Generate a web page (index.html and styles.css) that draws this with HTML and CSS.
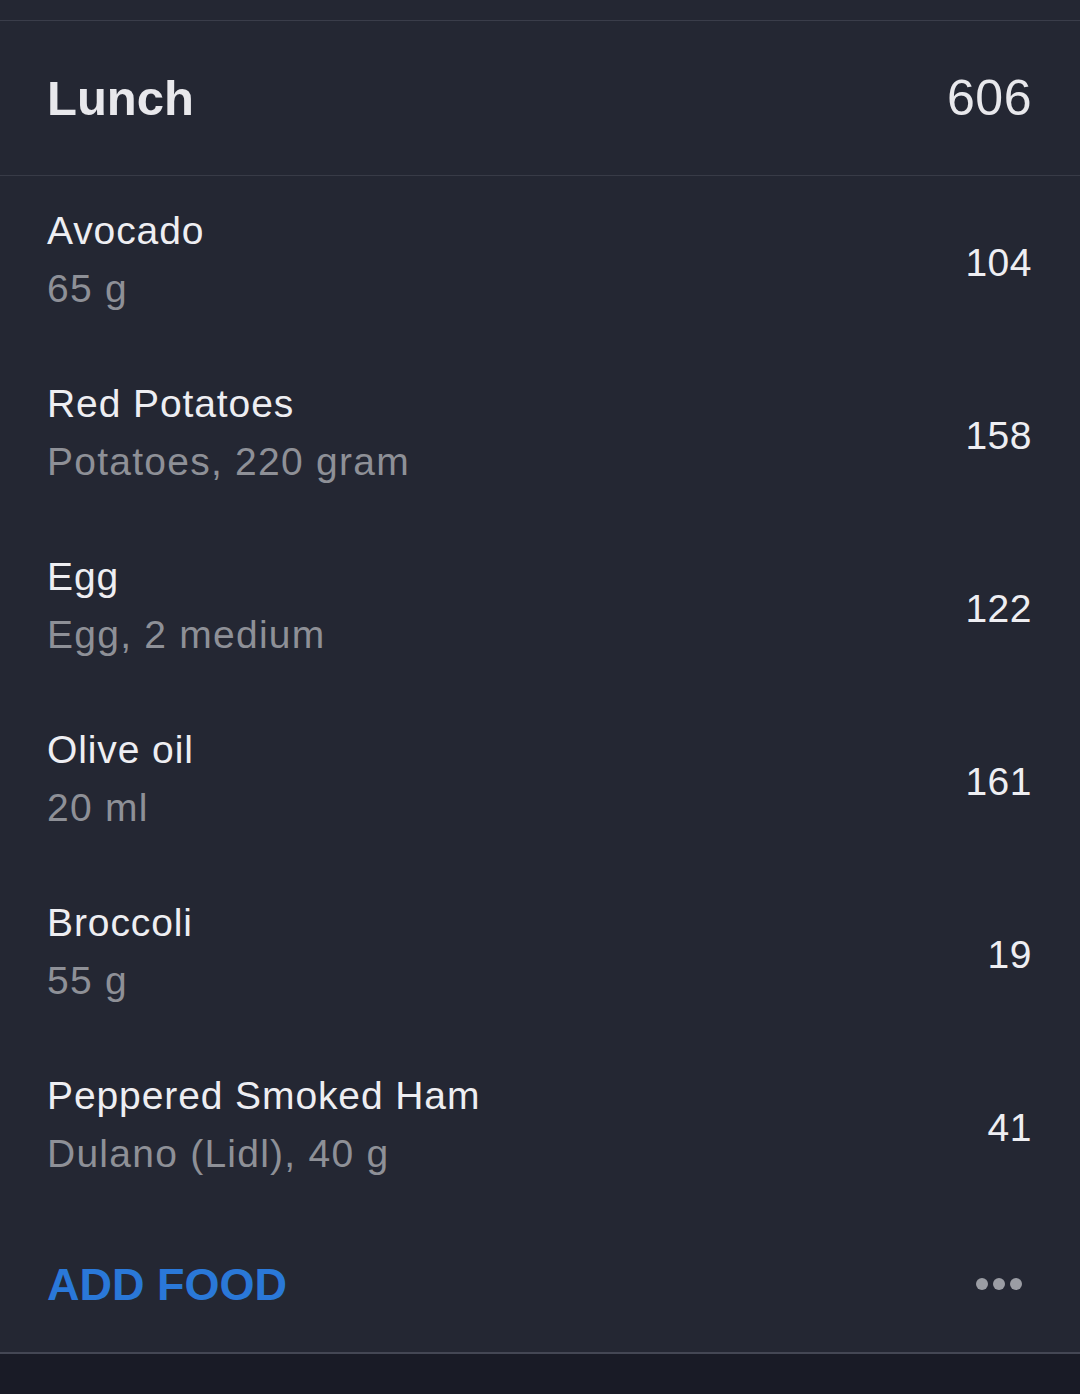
FILE: index.html
```html
<!DOCTYPE html>
<html>
<head>
<meta charset="utf-8">
<link rel="stylesheet" href="styles.css">
</head>
<body>
<div class="page">
  <div class="top"></div>
  <section class="card">
    <header class="head">
      <h1 class="title">Lunch</h1>
      <span class="total">606</span>
    </header>
    <ul class="list">
      <li class="row"><div class="info"><div class="name">Avocado</div><div class="sub">65 g</div></div><span class="kcal">104</span></li>
      <li class="row"><div class="info"><div class="name">Red Potatoes</div><div class="sub">Potatoes, 220 gram</div></div><span class="kcal">158</span></li>
      <li class="row"><div class="info"><div class="name">Egg</div><div class="sub">Egg, 2 medium</div></div><span class="kcal">122</span></li>
      <li class="row"><div class="info"><div class="name">Olive oil</div><div class="sub">20 ml</div></div><span class="kcal">161</span></li>
      <li class="row"><div class="info"><div class="name">Broccoli</div><div class="sub">55 g</div></div><span class="kcal">19</span></li>
      <li class="row"><div class="info"><div class="name">Peppered Smoked Ham</div><div class="sub">Dulano (Lidl), 40 g</div></div><span class="kcal">41</span></li>
    </ul>
    <footer class="foot">
      <span class="add">ADD FOOD</span>
      <span class="more"><i></i><i></i><i></i></span>
    </footer>
  </section>
  <div class="bottom"></div>
</div>
</body>
</html>
```
FILE: styles.css
```css
html, body {
  margin: 0;
  padding: 0;
  background: #191b26;
}
body {
  font-family: "Liberation Sans", Arial, sans-serif;
  color: #ececf0;
}
.page {
  width: 1080px;
  height: 1394px;
  display: flex;
  flex-direction: column;
}
.top {
  height: 20px;
  background: #242733;
}
.card {
  background: #242733;
  border-top: 1px solid #3a3d4a;
  border-bottom: 2px solid #444754;
}
.head {
  height: 155px;
  box-sizing: border-box;
  padding: 0 48px 0 47px;
  display: flex;
  align-items: center;
  justify-content: space-between;
  border-bottom: 1px solid #383b47;
}
.title {
  margin: 0;
  font-size: 49px;
  font-weight: 700;
  color: #e8e8ec;
  letter-spacing: 0;
}
.total {
  font-size: 50px;
  color: #e8e8ec;
  letter-spacing: 0.5px;
}
.list {
  list-style: none;
  margin: 0;
  padding: 0;
}
.row {
  height: 173px;
  box-sizing: border-box;
  padding: 0 48px 0 47px;
  display: flex;
  align-items: center;
  justify-content: space-between;
}
.info {
  display: flex;
  flex-direction: column;
  gap: 12px;
  margin-top: -6px;
}
.name {
  font-size: 39px;
  line-height: 46px;
  color: #eeeef2;
  letter-spacing: 0.9px;
}
.sub {
  font-size: 39px;
  line-height: 46px;
  color: #8e9097;
  letter-spacing: 1.25px;
}
.kcal {
  font-size: 39px;
  color: #eeeef2;
  letter-spacing: 0.5px;
}
.foot {
  height: 138px;
  box-sizing: border-box;
  padding: 0 58px 0 47px;
  display: flex;
  align-items: center;
  justify-content: space-between;
}
.add {
  font-size: 45px;
  font-weight: 700;
  color: #2a78d8;
  letter-spacing: 0;
  margin-top: 4px;
}
.more {
  display: flex;
  gap: 5px;
  margin-top: 2px;
}
.more i {
  display: block;
  width: 12px;
  height: 12px;
  border-radius: 50%;
  background: #9b9da4;
}
.bottom {
  flex: 1;
  background: #191b26;
}
```
